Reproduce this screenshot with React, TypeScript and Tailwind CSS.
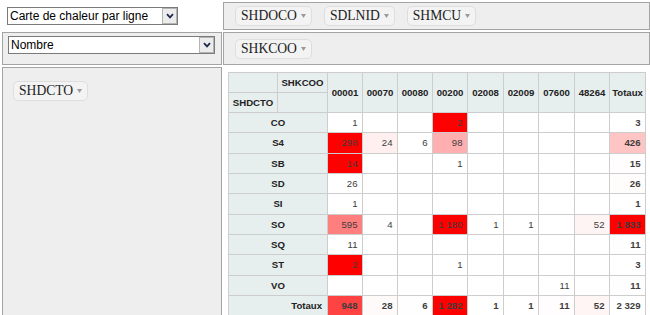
type Row = { label: string; values: (number | null)[] };

const cols = ['00001', '00070', '00080', '00200', '02008', '02009', '07600', '48264'];

const rows: Row[] = [
  { label: 'CO', values: [1, null, null, 2, null, null, null, null] },
  { label: 'S4', values: [298, 24, 6, 98, null, null, null, null] },
  { label: 'SB', values: [14, null, null, 1, null, null, null, null] },
  { label: 'SD', values: [26, null, null, null, null, null, null, null] },
  { label: 'SI', values: [1, null, null, null, null, null, null, null] },
  { label: 'SO', values: [595, 4, null, 1180, 1, 1, null, 52] },
  { label: 'SQ', values: [11, null, null, null, null, null, null, null] },
  { label: 'ST', values: [2, null, null, 1, null, null, null, null] },
  { label: 'VO', values: [null, null, null, null, null, null, 11, null] },
];

const colWidths = [49, 50, 35, 35, 35, 35, 36, 35, 36, 35, 36];

const fmt = (x: number) => String(x).replace(/\B(?=(\d{3})+(?!\d))/g, ' ');

// same red scale as the pivot heatmap renderer
function redScale(values: number[]) {
  const min = Math.min(...values);
  const max = Math.max(...values);
  return (x: number) => {
    if (max === min) return undefined;
    const n = 255 - Math.round((255 * (x - min)) / (max - min));
    return `rgb(255,${n},${n})`;
  };
}

function Chevron() {
  return (
    <svg width="8" height="6" viewBox="0 0 8 6" aria-hidden="true">
      <polyline points="1,1.2 4,4.4 7,1.2" fill="none" stroke="#1d2b4f" strokeWidth="1.8" />
    </svg>
  );
}

function Select({ value, className }: { value: string; className: string }) {
  return (
    <div className={`relative h-[18px] ${className}`}>
      <select
        defaultValue={value}
        className="block h-[18px] w-full appearance-none border border-[#7a7a7a] bg-white py-0 pl-[2px] font-['Liberation_Sans',Arial,sans-serif] text-[12px] leading-[14px] text-black outline-none"
      >
        <option>{value}</option>
      </select>
      <span className="pointer-events-none absolute right-[1px] top-[1px] flex h-[16px] w-[15px] items-center justify-center border border-[#b4b4b4] bg-[#ececec]">
        <Chevron />
      </span>
    </div>
  );
}

function Attr({ name }: { name: string }) {
  return (
    <span className="inline-flex h-[20px] items-center rounded-[5px] border border-[#dedede] bg-[#f3f3f3] px-[5px] font-['Liberation_Serif','Times_New_Roman',serif] text-[13.6px] leading-none text-[#222]">
      {name}
      <svg width="5" height="4" viewBox="0 0 5 4" className="ml-[4px]" aria-hidden="true">
        <polygon points="0,0 5,0 2.5,4" fill="#9a9a9a" />
      </svg>
    </span>
  );
}

function PivotTable() {
  const rowTotals = rows.map((r) => r.values.reduce<number>((s, v) => s + (v ?? 0), 0));
  const colTotals = cols.map((_, i) => rows.reduce((s, r) => s + (r.values[i] ?? 0), 0));
  const grand = rowTotals.reduce((s, v) => s + v, 0);
  const rowTotalColor = redScale(rowTotals);
  const colTotalColor = redScale(colTotals);

  const th = 'border border-[#cdcdcd] bg-[#e6eeee] px-[2px] py-0 font-bold text-[#222]';
  const td = 'border border-[#cdcdcd] px-[4.5px] py-0 text-right align-middle text-[#3d3d3d]';

  return (
    <table className="w-[418px] table-fixed border-collapse font-['Liberation_Sans',Arial,sans-serif] text-[9.6px] leading-[11px]">
      <colgroup>
        {colWidths.map((w, i) => (
          <col key={i} style={{ width: w }} />
        ))}
      </colgroup>
      <thead>
        <tr className="h-[20px]">
          <th className={th} />
          <th className={`${th} text-center`}>SHKCOO</th>
          {cols.map((c) => (
            <th key={c} rowSpan={2} className={`${th} text-center`}>
              {c}
            </th>
          ))}
          <th rowSpan={2} className={`${th} text-center`}>
            Totaux
          </th>
        </tr>
        <tr className="h-[20px]">
          <th className={`${th} text-center`}>SHDCTO</th>
          <th className={th} />
        </tr>
      </thead>
      <tbody>
        {rows.map((r, ri) => {
          const color = redScale(r.values.filter((v): v is number => v !== null));
          return (
            <tr key={r.label} className="h-[20.33px]">
              <th colSpan={2} className={`${th} text-center`}>
                {r.label}
              </th>
              {r.values.map((v, i) => (
                <td key={i} className={`${td} bg-white`} style={v !== null ? { backgroundColor: color(v) } : undefined}>
                  {v !== null ? fmt(v) : ''}
                </td>
              ))}
              <td className={`${td} bg-white font-bold`} style={{ backgroundColor: rowTotalColor(rowTotals[ri]) }}>
                {fmt(rowTotals[ri])}
              </td>
            </tr>
          );
        })}
        <tr className="h-[20.33px]">
          <th colSpan={2} className={`${th} pr-[5px] text-right`}>
            Totaux
          </th>
          {colTotals.map((v, i) => (
            <td key={i} className={`${td} bg-white font-bold`} style={{ backgroundColor: colTotalColor(v) }}>
              {fmt(v)}
            </td>
          ))}
          <td className={`${td} bg-white font-bold`}>{fmt(grand)}</td>
        </tr>
      </tbody>
    </table>
  );
}

export default function App() {
  return (
    <div className="grid h-[315px] w-[650px] grid-cols-[220px_427px] grid-rows-[28px_33px_1fr] gap-x-px gap-y-[2px] overflow-hidden bg-white p-[2px] text-[#333]">
      <div className="flex items-center pl-[5px]">
        <Select value="Carte de chaleur par ligne" className="w-[171px]" />
      </div>
      <div className="flex items-center gap-[12px] border border-[#a4a4a4] bg-[#eeeeee] pl-[11px]">
        <Attr name="SHDOCO" />
        <Attr name="SDLNID" />
        <Attr name="SHMCU" />
      </div>

      <div className="border border-[#a4a4a4] bg-[#eeeeee] pl-[5px] pt-[3px]">
        <Select value="Nombre" className="w-[207px]" />
      </div>
      <div className="flex items-center border border-[#a4a4a4] bg-[#eeeeee] pl-[11px]">
        <Attr name="SHKCOO" />
      </div>

      <div className="border border-[#a4a4a4] bg-[#eeeeee] pl-[10px] pt-[9px]">
        <Attr name="SHDCTO" />
      </div>
      <div className="pl-[5px] pt-[5px]">
        <PivotTable />
      </div>
    </div>
  );
}
